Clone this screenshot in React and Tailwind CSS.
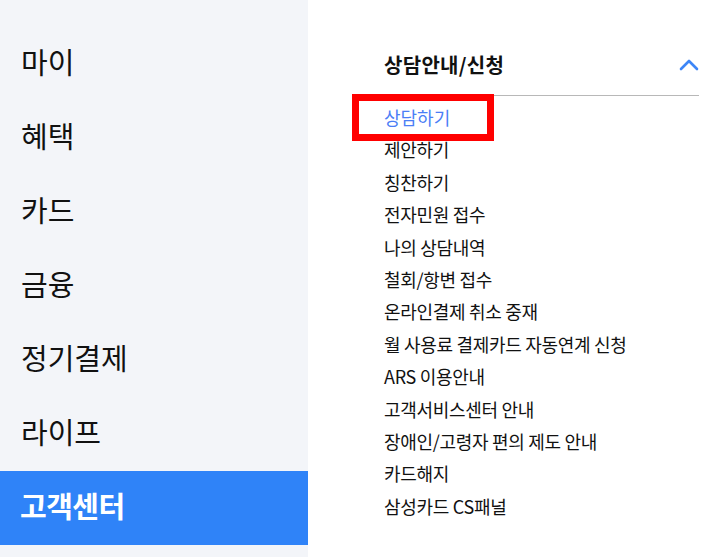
import React from "react";

const left = ["마이", "혜택", "카드", "금융", "정기결제", "라이프"];
const items = [
  "제안하기",
  "칭찬하기",
  "전자민원 접수",
  "나의 상담내역",
  "철회/항변 접수",
  "온라인결제 취소 중재",
  "월 사용료 결제카드 자동연계 신청",
  "ARS 이용안내",
  "고객서비스센터 안내",
  "장애인/고령자 편의 제도 안내",
  "카드해지",
  "삼성카드 CS패널",
];

export default function App() {
  return (
    <div
      className="flex w-[713px] h-[557px] overflow-hidden bg-white"
      style={{ fontFamily: '"Noto Sans CJK KR", "Noto Sans", sans-serif' }}
    >
      <aside className="w-[308px] shrink-0 bg-[#f3f5f9] pt-[27px]">
        {left.map((t) => (
          <div
            key={t}
            className="h-[74px] flex items-center pl-[21px] pb-[5px] text-[29px] tracking-[0px] text-[#111111]"
          >
            {t}
          </div>
        ))}
        <div className="h-[74px] flex items-center pl-[20px] pb-[4px] text-[29px] tracking-[-0.5px] font-bold text-white bg-[#2f83f8]">
          고객센터
        </div>
      </aside>
      <main className="relative flex-1 pl-[76px] pr-[14px] pt-[36px]">
        <div className="h-[60px] flex items-center justify-between border-b border-[#b8b8b8]">
          <span className="text-[20px] font-bold tracking-[0.3px] text-[#111111] -mt-[2px]">
            상담안내/신청
          </span>
          <svg width="20" height="12" viewBox="0 0 20 12" className="-mt-[2px]">
            <path
              d="M2 10 L10 2 L18 10"
              fill="none"
              stroke="#3d86f7"
              strokeWidth="2.6"
              strokeLinecap="round"
              strokeLinejoin="round"
            />
          </svg>
        </div>
        <ul className="pt-[5px]">
          <li className="h-[32.4px] leading-[32.4px] text-[18px] tracking-[0px] text-[#4b7ef6]">
            상담하기
          </li>
          {items.map((t) => (
            <li
              key={t}
              className="h-[32.4px] leading-[32.4px] text-[18px] tracking-[-0.3px] text-[#111111] whitespace-nowrap"
            >
              {t}
            </li>
          ))}
        </ul>
        <div className="absolute left-[44px] top-[94px] w-[142px] h-[47px] border-[7px] border-[#ff0000]" />
      </main>
    </div>
  );
}
